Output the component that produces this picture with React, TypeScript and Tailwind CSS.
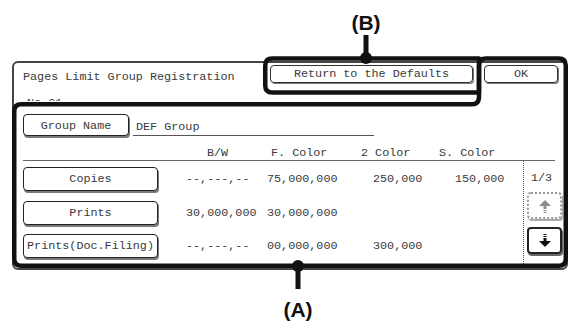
import type { ReactNode } from 'react';

const rows = [
  { name: 'Copies', bw: '--,---,--', full: '75,000,000', two: '250,000', single: '150,000' },
  { name: 'Prints', bw: '30,000,000', full: '30,000,000', two: '', single: '' },
  { name: 'Prints(Doc.Filing)', bw: '--,---,--', full: '00,000,000', two: '300,000', single: '' },
];

function Key({ children, className = '' }: { children: ReactNode; className?: string }) {
  return (
    <div
      className={`flex items-center justify-center rounded-[4px] border border-[#222] bg-white shadow-[1px_2px_0_#7a7a7a] ${className}`}
    >
      {children}
    </div>
  );
}

function ArrowIcon({ up }: { up?: boolean }) {
  const fill = up ? '#8c8c8c' : '#111';
  return (
    <svg width="12" height="14" viewBox="0 0 12 14" className={up ? 'rotate-180' : ''}>
      <rect x="4.5" y="0" width="3" height="1" fill={fill} />
      <rect x="4.5" y="2" width="3" height="1" fill={fill} />
      <rect x="4.5" y="4" width="3" height="3" fill={fill} />
      <polygon points="0,7 12,7 6,13" fill={fill} />
    </svg>
  );
}

export default function App() {
  return (
    <div className="relative h-[322px] w-[572px] overflow-hidden bg-white font-['Liberation_Mono',monospace] text-[11.75px] leading-[14px] text-[#3a3a3a]">
      {/* dialog */}
      <div className="ml-[12px] mt-[61px] flex h-[209px] w-[556px] flex-col rounded-[6px] border-2 border-[#444]">
        <div className="flex items-start pt-[2px]">
          <div className="ml-[9px] mt-[5px]">Pages Limit Group Registration</div>
          <div className="ml-auto flex h-[18px] w-[203px] items-center justify-center rounded-[4px] border border-[#333] shadow-[1px_1px_0_#777]">
            Return to the Defaults
          </div>
          <div className="ml-[11px] mr-[8px] flex h-[18px] w-[74px] items-center justify-center rounded-[4px] border border-[#333] shadow-[1px_1px_0_#777]">
            OK
          </div>
        </div>
        {/* hidden behind the (A) outline, only its top shows */}
        <div className="ml-[13px] mt-[12px] h-[5px] overflow-hidden">No.01</div>

        <div className="ml-[9px] mt-[13px] flex items-start">
          <Key className="h-[22px] w-[106px] pt-[2px]">Group Name</Key>
          <div className="ml-[4px] h-[22px] w-[241px] border-b border-[#555] pl-[3px] pt-[6px]">DEF Group</div>
        </div>

        <div className="ml-[9px] mt-[10px] flex h-[15px] w-[532px] border-b border-[#666]">
          <div className="w-[184px]" />
          <div className="w-[64px]">B/W</div>
          <div className="w-[90px]">F. Color</div>
          <div className="w-[78px]">2 Color</div>
          <div>S. Color</div>
        </div>

        <div className="ml-[9px] flex h-[103px]">
          <div className="flex w-[500px] flex-col gap-[9.5px] pt-[6px]">
            {rows.map((r) => (
              <div key={r.name} className="flex h-[24px] items-center">
                <Key className="h-[24px] w-[135px]">{r.name}</Key>
                <div className="w-[109px] pl-[28px]">{r.bw}</div>
                <div className="w-[106px]">{r.full}</div>
                <div className="w-[82px]">{r.two}</div>
                <div>{r.single}</div>
              </div>
            ))}
          </div>
          <div className="flex flex-col border-l border-dotted border-[#555] pl-[3px]">
            <div className="ml-[4px] pt-[10px]">1/3</div>
            <div className="mt-[7px] flex h-[27px] w-[35px] items-center justify-center rounded-[4px] border-2 border-dotted border-[#9a9a9a] shadow-[1px_2px_0_#aaa]">
              <ArrowIcon up />
            </div>
            <div className="mt-[8px] flex h-[27px] w-[35px] items-center justify-center rounded-[4px] border-2 border-[#222] shadow-[1px_2px_0_#666]">
              <ArrowIcon />
            </div>
          </div>
        </div>
      </div>

      {/* callout outlines */}
      <svg className="pointer-events-none absolute inset-0" width="572" height="322">
        <g fill="none" stroke="#111" strokeWidth="4.5" strokeLinejoin="round">
          <path d="M 272.25 58.5 H 479 V 92.5 H 272.25 Q 265.25 92.5 265.25 85.5 V 65.5 Q 265.25 58.5 272.25 58.5 Z" />
          <path d="M 21.25 104.25 H 472 Q 479 104.25 479 97.25 V 65.5 Q 479 58.5 486 58.5 H 558.75 Q 565.75 58.5 565.75 65.5 V 258.75 Q 565.75 265.75 558.75 265.75 H 21.25 Q 14.25 265.75 14.25 258.75 V 111.25 Q 14.25 104.25 21.25 104.25 Z" />
        </g>
        <rect x="363.5" y="35" width="5" height="22" fill="#111" />
        <circle cx="366" cy="58" r="6" fill="#111" />
        <rect x="295.5" y="266" width="5" height="23" fill="#111" />
        <circle cx="298" cy="266" r="6" fill="#111" />
      </svg>
      <div className="absolute left-[336px] top-[12px] w-[60px] text-center font-['Liberation_Sans',sans-serif] text-[21px] font-bold leading-[21px] text-[#111]">
        (B)
      </div>
      <div className="absolute left-[268px] top-[299px] w-[60px] text-center font-['Liberation_Sans',sans-serif] text-[21px] font-bold leading-[21px] text-[#111]">
        (A)
      </div>
    </div>
  );
}
